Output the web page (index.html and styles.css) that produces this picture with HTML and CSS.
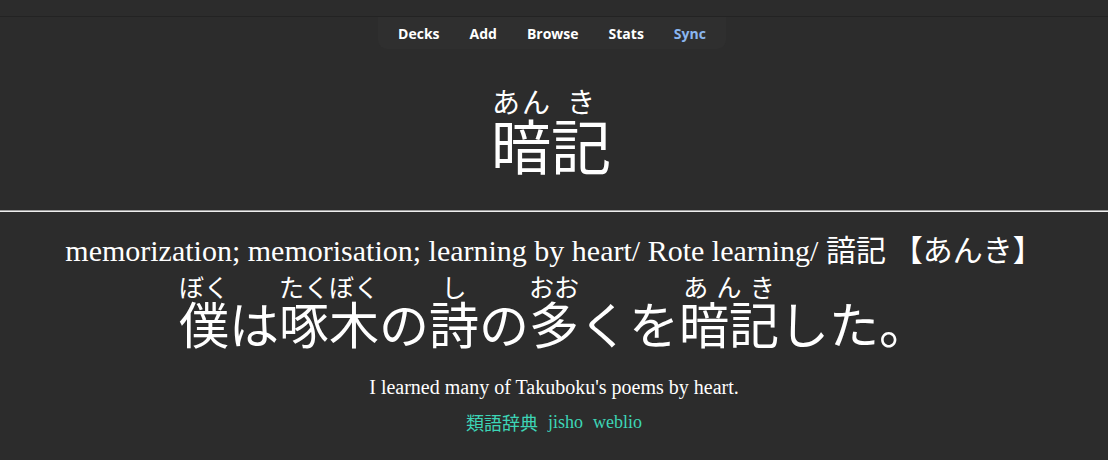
FILE: index.html
```html
<!DOCTYPE html>
<html lang="ja">
<head>
<meta charset="utf-8">
<title>AnkiWeb</title>
<link rel="stylesheet" href="styles.css">
</head>
<body>
<div class="topbar"></div>
<nav class="nav">
  <a class="nav-link" href="#">Decks</a>
  <a class="nav-link" href="#">Add</a>
  <a class="nav-link" href="#">Browse</a>
  <a class="nav-link" href="#">Stats</a>
  <a class="nav-link nav-active" href="#">Sync</a>
</nav>
<main class="card">
  <div class="front"><ruby>暗<rt>あん</rt></ruby><ruby>記<rt>き</rt></ruby></div>
  <hr class="answer">
  <div class="meaning">memorization; memorisation; learning by heart/ Rote learning/ <span class="ja">諳記 【あんき】</span></div>
  <div class="sentence"><ruby>僕<rt>ぼく</rt></ruby>は<ruby>啄木<rt>たくぼく</rt></ruby>の<ruby>詩<rt>し</rt></ruby>の<ruby>多<rt>おお</rt></ruby>くを<ruby>暗記<rt>あんき</rt></ruby>した。</div>
  <div class="translation">I learned many of Takuboku's poems by heart.</div>
  <div class="links"><a class="dict ja" href="#">類語辞典</a><a class="dict" href="#">jisho</a><a class="dict" href="#">weblio</a></div>
</main>
</body>
</html>
```

FILE: styles.css
```css
html, body {
  margin: 0;
  padding: 0;
  background: #2c2c2c;
  color: #ffffff;
}
body {
  font-family: "Liberation Serif", "Noto Sans CJK JP", serif;
}
.topbar {
  height: 16px;
  border-bottom: 1px solid #232323;
}
.nav {
  display: flex;
  width: max-content;
  margin: 0 auto;
  gap: 30px;
  padding: 0 20px 0 20px;
  height: 32px;
  align-items: center;
  background: #2f2f2f;
  border-radius: 0 0 9px 9px;
  font-family: "Open Sans", "Noto Sans", sans-serif;
  font-weight: 700;
  font-size: 14px;
  transform: translateX(-2px);
}
.nav-link {
  color: #ffffff;
  text-decoration: none;
}
.nav-active {
  color: #8ab6ef;
}
.card {
  text-align: center;
}
.front {
  font-family: "Noto Sans CJK JP", sans-serif;
  font-size: 60px;
  line-height: 60px;
  padding-top: 65px;
  padding-bottom: 36px;
  transform: translateX(-3px);
}
.front rt {
  font-size: 28px;
  line-height: 14px;
}
.answer {
  margin: 0;
  border: 0;
  border-top: 1px solid #9c9c9c;
  border-bottom: 1px solid #efefef;
}
.ja {
  font-family: "Noto Sans CJK JP", sans-serif;
}
.meaning {
  font-size: 30px;
  line-height: 34px;
  margin-top: 19px;
}
.sentence {
  font-family: "Noto Sans CJK JP", sans-serif;
  font-size: 50px;
  line-height: 50px;
  margin-top: 7px;
}
.sentence rt {
  font-size: 25px;
  line-height: 8px;
}
.translation {
  font-size: 20px;
  line-height: 24px;
  margin-top: 28px;
}
.links {
  display: flex;
  justify-content: center;
  gap: 10px;
  margin-top: 12px;
  font-size: 18px;
  line-height: 22px;
}
.dict {
  color: #3dd5b6;
  text-decoration: none;
}
```
